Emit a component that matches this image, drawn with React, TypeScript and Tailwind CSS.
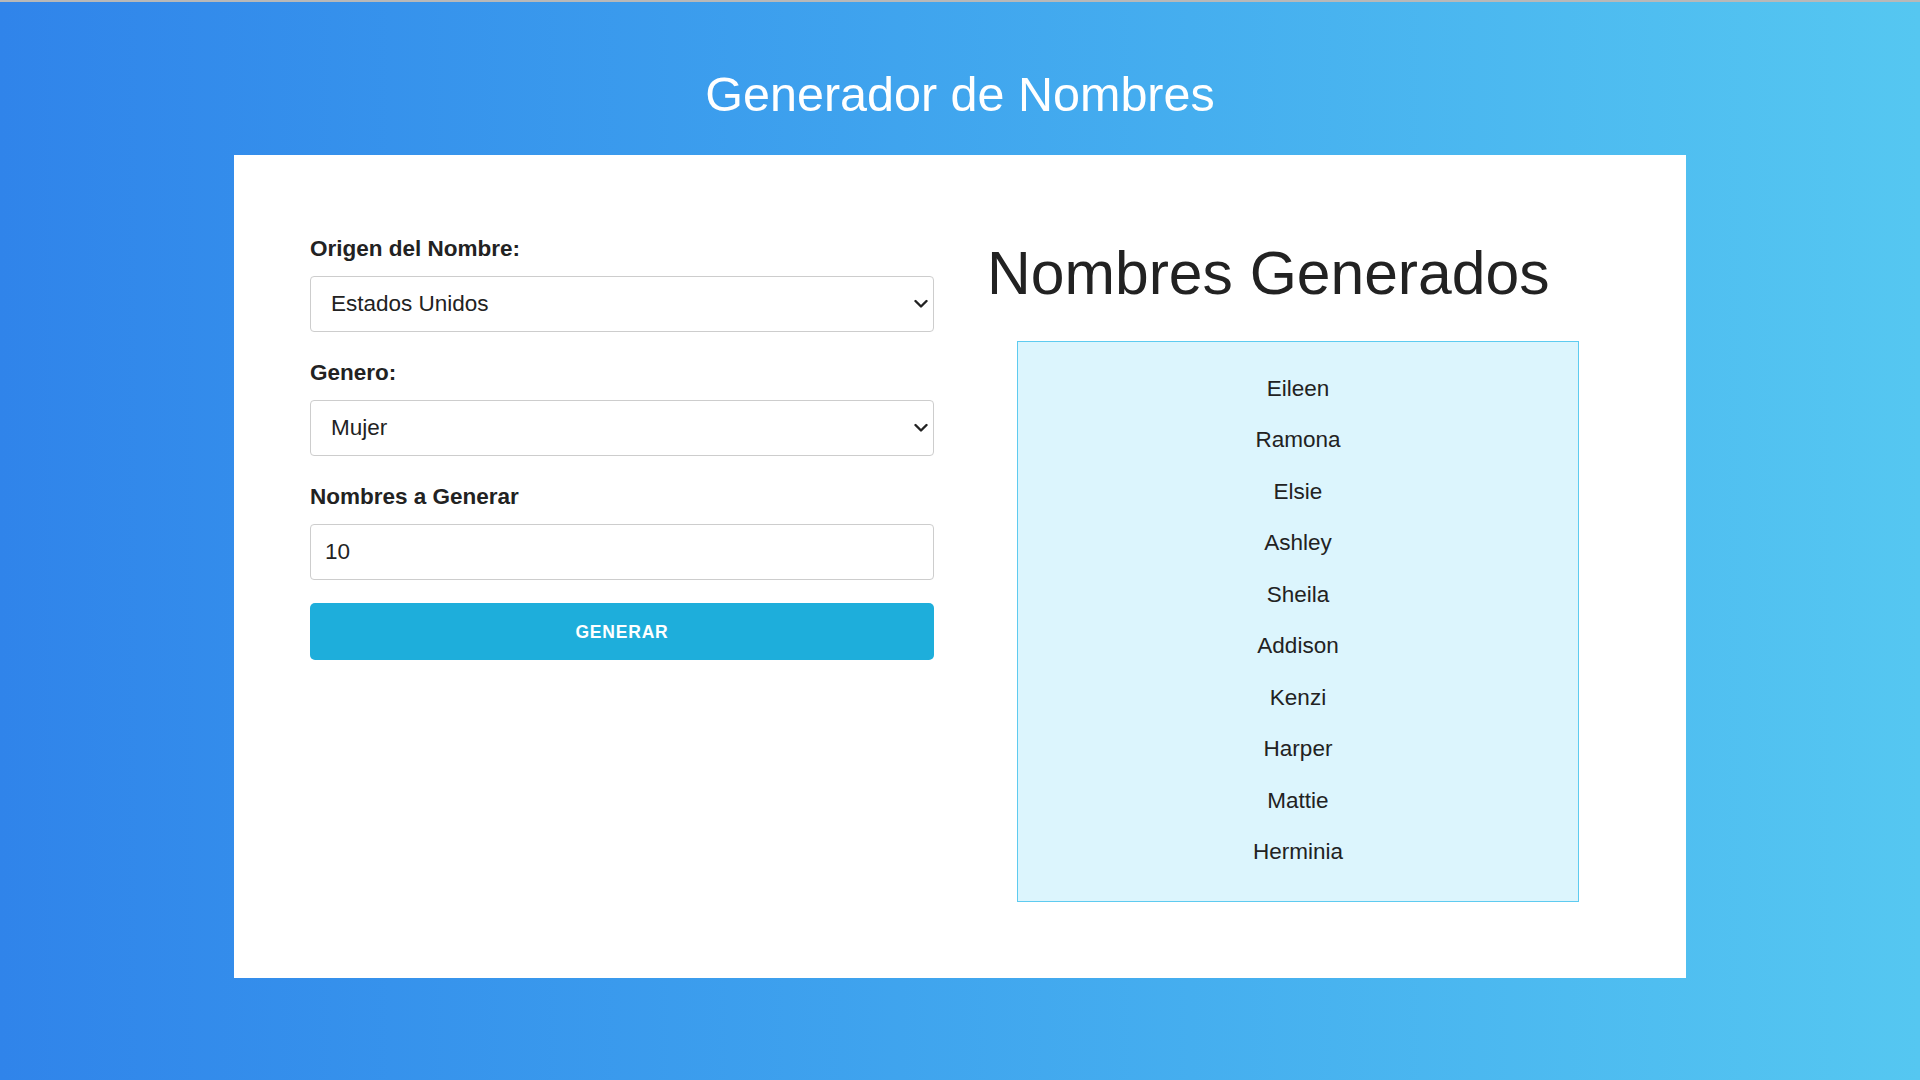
const NAMES = ["Eileen", "Ramona", "Elsie", "Ashley", "Sheila", "Addison", "Kenzi", "Harper", "Mattie", "Herminia"]

function Chevron() {
  return (
    <svg
      className="pointer-events-none absolute top-1/2 right-[6px] -translate-y-1/2"
      width="14"
      height="9"
      viewBox="0 0 14 9"
      fill="none"
    >
      <polyline points="1.5,1.5 7,7 12.5,1.5" stroke="#222" strokeWidth="2.4" strokeLinecap="round" strokeLinejoin="round" />
    </svg>
  )
}

function SelectField({ label, value, options }: { label: string; value: string; options: string[] }) {
  return (
    <div className="flex flex-col">
      <label className="mb-[14px] text-[22.5px] leading-[26px] font-bold">{label}</label>
      <div className="relative">
        <select
          defaultValue={value}
          className="h-[56px] w-full appearance-none rounded-[4px] border border-[#cdcdcd] bg-white pl-[20px] text-[22.5px] text-[#222] outline-none"
        >
          {options.map((o) => (
            <option key={o}>{o}</option>
          ))}
        </select>
        <Chevron />
      </div>
    </div>
  )
}

export default function App() {
  return (
    <div className="flex min-h-screen flex-col bg-linear-to-r from-[#3084ea] to-[#55c7f1] font-['Liberation_Sans',Arial,sans-serif] text-[#222]">
      <div className="h-[2px] bg-[#b8b8b8]" />

      <h1 className="mt-[68px] text-center text-[48.5px] leading-[48px] font-normal text-white">Generador de Nombres</h1>

      <main className="mx-auto mt-[37px] grid w-[1452px] grid-cols-2 gap-x-[52px] bg-white px-[76px] pt-[81px] pb-[76px]">
        {/* form */}
        <div className="flex flex-col gap-[28px] self-start">
          <SelectField label="Origen del Nombre:" value="Estados Unidos" options={["Estados Unidos", "España", "México"]} />
          <SelectField label="Genero:" value="Mujer" options={["Mujer", "Hombre"]} />
          <div className="flex flex-col">
            <label className="mb-[14px] text-[22.5px] leading-[26px] font-bold">Nombres a Generar</label>
            <input
              type="text"
              defaultValue="10"
              className="h-[56px] w-full rounded-[4px] border border-[#cdcdcd] bg-white pl-[14px] text-[22.5px] text-[#222] outline-none"
            />
            <button className="mt-[23px] h-[57px] w-full rounded-[5px] bg-[#1eaedb] pt-[2px] text-[17.5px] font-bold tracking-[0.8px] text-white uppercase">
              Generar
            </button>
          </div>
        </div>

        {/* results */}
        <div className="flex flex-col">
          <h2 className="mt-[7px] ml-[1px] text-[60.6px] leading-[60px] font-normal text-[#222]">Nombres Generados</h2>
          <ul className="mx-auto mt-[38px] flex w-[562px] flex-col items-center gap-[25.44px] border border-[#5ecbf0] bg-[#dcf5fd] pt-[34px] pb-[36px] text-[22.5px] leading-[26px] text-[#222]">
            {NAMES.map((n) => (
              <li key={n}>{n}</li>
            ))}
          </ul>
        </div>
      </main>
    </div>
  )
}
